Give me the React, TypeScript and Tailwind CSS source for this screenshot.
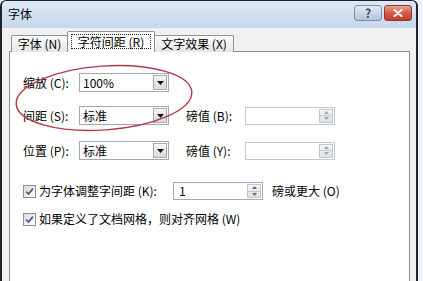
import React from 'react';

const Combo: React.FC<{ value: string }> = ({ value }) => (
  <div className="flex h-[19px] w-[90px] border border-[#a3a9b3] bg-white">
    <span className="flex-1 pl-[3px] text-[12px] leading-[17px]">{value}</span>
    <span className="my-[1px] mr-[1px] flex w-[14px] items-center justify-center border border-[#a9a9a9] bg-gradient-to-b from-[#f6f6f6] to-[#d9d9d9]">
      <svg width="7" height="4" viewBox="0 0 7 4">
        <path d="M0 0h7L3.5 4z" fill="#111" />
      </svg>
    </span>
  </div>
);

const Spin: React.FC<{ value?: string; disabled?: boolean; w?: string }> = ({ value, disabled }) => (
  <div
    className={`flex h-[18px] w-[90px] border bg-white ${
      disabled ? 'border-[#c5c8cc]' : 'border-[#a3a9b3]'
    }`}
  >
    <span className="flex-1 pl-[5px] text-[12px] leading-[16px]">{value}</span>
    <span className="my-[1px] mr-[1px] flex w-[14px] flex-col border border-[#c3c8cf] bg-gradient-to-b from-[#f4f6f8] to-[#dde2e8]">
      <span className="flex flex-1 items-center justify-center border-b border-[#c3c8cf]">
        <svg width="5" height="3" viewBox="0 0 5 3">
          <path d="M0 3h5L2.5 0z" fill={disabled ? '#9aa3ad' : '#5f6b7a'} />
        </svg>
      </span>
      <span className="flex flex-1 items-center justify-center">
        <svg width="5" height="3" viewBox="0 0 5 3">
          <path d="M0 0h5L2.5 3z" fill={disabled ? '#9aa3ad' : '#5f6b7a'} />
        </svg>
      </span>
    </span>
  </div>
);

const Check: React.FC = () => (
  <span className="flex h-[13px] w-[13px] shrink-0 items-center justify-center border border-[#8e8f8f] bg-gradient-to-br from-[#dadada] to-white">
    <svg width="9" height="9" viewBox="0 0 9 9">
      <path d="M1.2 4.6l2.3 2.4L7.9 1.6" stroke="#4a5d82" strokeWidth="1.8" fill="none" />
    </svg>
  </span>
);

export default function App() {
  return (
    <div className="relative h-[281px] w-[423px] overflow-hidden bg-[#eef3f9] font-['Noto_Sans_CJK_SC','Liberation_Sans',sans-serif] text-[12px] text-black">
      <div className="flex h-[300px] w-[418px] flex-col rounded-t-[6px] border-l-2 border-r-2 border-t border-[#1f2328] bg-[#dfe8f2]">
        {/* title bar */}
        <div className="flex h-[27px] shrink-0 items-start rounded-t-[5px] bg-gradient-to-b from-[#dde8f5] to-[#c8d8eb] pl-[6px] pr-[4px]">
          <span className="mt-[6px] text-[12px] leading-[14px]">字体</span>
          <div className="ml-auto mt-[4px] flex gap-[2px]">
            <span className="flex h-[16px] w-[28px] items-center justify-center rounded-[3px] border border-[#7b8ea6] bg-gradient-to-b from-[#e3ebf4] to-[#b3c3d7] text-[12px] font-bold leading-none text-[#3b4a63]">
              ?
            </span>
            <span className="flex h-[16px] w-[28px] items-center justify-center rounded-[3px] border border-[#8c3a2f] bg-gradient-to-b from-[#e9a08f] via-[#d15a43] to-[#c2402a]">
              <svg width="10" height="8" viewBox="0 0 10 8">
                <path d="M1.5 1l7 6M8.5 1l-7 6" stroke="#fff" strokeWidth="2.2" strokeLinecap="round" />
              </svg>
            </span>
          </div>
        </div>

        {/* client area */}
        <div className="flex flex-1 flex-col bg-[#f0f0f0] pl-[7px] pr-[6px]">
          {/* tabs */}
          <div className="relative z-10 flex h-[23px] items-end pl-[2px]">
            <div className="mb-[-1px] flex h-[17px] w-[57px] items-center justify-center rounded-t-[2px] border border-b-0 border-[#8d929a] bg-gradient-to-b from-[#fbfbfb] to-[#e6e6e6] leading-none">
              字体 (N)
            </div>
            <div className="mx-[-1px] mb-[-1px] flex h-[21px] w-[88px] items-center justify-center rounded-t-[2px] border border-b-0 border-[#8d929a] bg-white px-[3px] pb-[1px]">
              <span className="flex h-[15px] w-full items-center justify-center border border-dotted border-[#222] leading-none">
                字符间距 (R)
              </span>
            </div>
            <div className="mb-[-1px] flex h-[17px] w-[80px] items-center justify-center rounded-t-[2px] border border-b-0 border-[#8d929a] bg-gradient-to-b from-[#fbfbfb] to-[#e6e6e6] leading-none">
              文字效果 (X)
            </div>
          </div>

          {/* panel */}
          <div className="flex flex-1 flex-col border border-[#8d929a] bg-white pl-[13px] pt-[21px]">
            <div className="flex h-[19px] items-center">
              <span className="w-[56px]">缩放 (C):</span>
              <Combo value="100%" />
            </div>
            <div className="mt-[14px] flex h-[19px] items-center">
              <span className="w-[56px]">间距 (S):</span>
              <Combo value="标准" />
              <span className="ml-[17px] w-[59px]">磅值 (B):</span>
              <Spin disabled />
            </div>
            <div className="mt-[16px] flex h-[19px] items-center">
              <span className="w-[56px]">位置 (P):</span>
              <Combo value="标准" />
              <span className="ml-[17px] w-[59px]">磅值 (Y):</span>
              <Spin disabled />
            </div>
            <div className="mt-[22px] flex h-[18px] items-center">
              <Check />
              <span className="ml-[3px] w-[134px]">为字体调整字间距 (K):</span>
              <Spin value="1" />
              <span className="ml-[9px]">磅或更大 (O)</span>
            </div>
            <div className="mt-[11px] flex h-[16px] items-center">
              <Check />
              <span className="ml-[3px]">如果定义了文档网格，则对齐网格 (W)</span>
            </div>
          </div>
        </div>
      </div>

      {/* red annotation ellipse */}
      <svg className="pointer-events-none absolute left-0 top-0" width="423" height="281">
        <ellipse
          cx="104"
          cy="98"
          rx="88"
          ry="32"
          transform="rotate(-4 104 98)"
          fill="none"
          stroke="#b23a48"
          strokeWidth="1.4"
        />
      </svg>
    </div>
  );
}
